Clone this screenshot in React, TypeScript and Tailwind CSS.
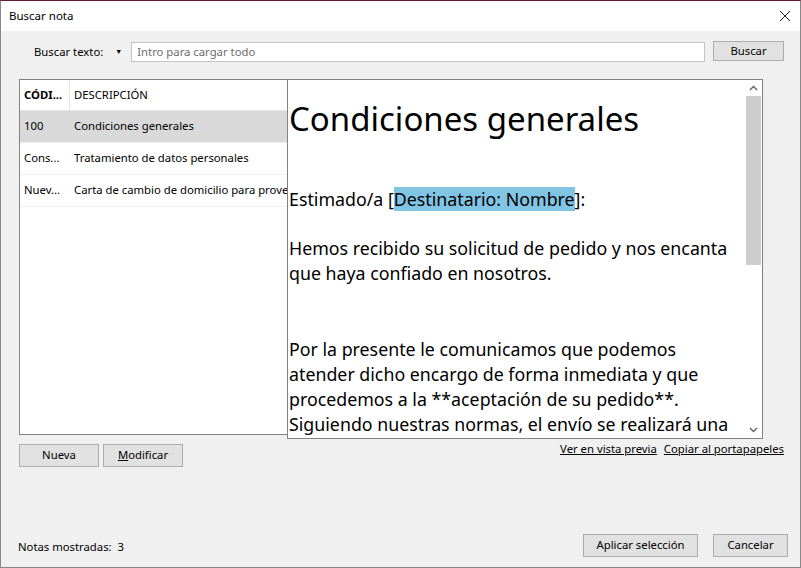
import React from "react"

const ui = { fontFamily: '"Noto Sans", "Open Sans", sans-serif' }

function Chevron({ down = false }: { down?: boolean }) {
  return (
    <svg width="9" height="6" viewBox="0 0 9 6" className={down ? "rotate-180" : ""}>
      <path d="M1 5 L4.5 1.5 L8 5" fill="none" stroke="#606060" strokeWidth="1.4" />
    </svg>
  )
}

function WinButton({ children, className = "" }: { children: React.ReactNode; className?: string }) {
  return (
    <div
      className={`flex items-center justify-center border border-[#adadad] bg-[#e1e1e1] text-[11.3px] text-black whitespace-nowrap ${className}`}
    >
      {children}
    </div>
  )
}

const rows = [
  { code: "100", desc: "Condiciones generales", selected: true },
  { code: "Cons...", desc: "Tratamiento de datos personales", selected: false },
  { code: "Nuev...", desc: "Carta de cambio de domicilio para proveedores", selected: false },
]

export default function App() {
  return (
    <div
      className="w-[801px] h-[568px] flex flex-col bg-[#f0f0f0] border border-[#888888] border-t-[#6b1a33] overflow-hidden text-black"
      style={ui}
    >
      {/* barra de título */}
      <div className="h-[30px] shrink-0 bg-white flex items-center justify-between pl-[8px] pr-[9px]">
        <span className="text-[11.5px]">Buscar nota</span>
        <svg width="12" height="12" viewBox="0 0 12 12">
          <path d="M1 1 L11 11 M11 1 L1 11" stroke="#222" strokeWidth="1" />
        </svg>
      </div>

      {/* búsqueda */}
      <div className="flex items-center h-[20px] mt-[11px] pl-[33px] pr-[16px]">
        <span className="text-[11.3px] whitespace-nowrap">Buscar texto:</span>
        <span className="text-[7px] ml-[12px] w-[16px]">▼</span>
        <div className="ml-auto h-[20px] w-[574px] bg-white border border-[#c4c4c4] flex items-center pl-[5px]">
          <span className="text-[11.3px] text-[#6d6d6d]">Intro para cargar todo</span>
        </div>
        <WinButton className="ml-[8px] h-[20px] w-[71px] -mt-[2px]">Buscar</WinButton>
      </div>

      {/* lista + vista previa */}
      <div className="flex mt-[17px] pl-[18px] h-[360px]">
        <div className="w-[269px] h-[356px] bg-white border border-[#828282] flex flex-col overflow-hidden">
          <div className="h-[31px] flex border-b border-[#e5e5e5] text-[11.3px] shrink-0">
            <div className="w-[50px] border-r border-[#e5e5e5] flex items-center pl-[4px] font-bold">CÓDI...</div>
            <div className="flex items-center pl-[4px]">DESCRIPCIÓN</div>
          </div>
          {rows.map((r) => (
            <div
              key={r.code}
              className={`h-[32px] shrink-0 flex items-center text-[11.3px] whitespace-nowrap border-b border-[#f0f0f0] ${
                r.selected ? "bg-[#d9d9d9]" : ""
              }`}
            >
              <span className="w-[50px] pl-[4px] shrink-0">{r.code}</span>
              <span className="pl-[4px]">{r.desc}</span>
            </div>
          ))}
        </div>

        <div className="relative z-10 -ml-[1px] w-[476px] h-[360px] bg-white border border-[#828282] flex">
          <div className="flex-1 overflow-hidden pl-[1px] text-[17.8px] leading-[25px] whitespace-nowrap">
            <div className="text-[33px] leading-[40px] mt-[19px]">Condiciones generales</div>
            <div className="mt-[48px]">
              Estimado/a [<span className="bg-[#80c5e4]">Destinatario: Nombre</span>]:
            </div>
            <div className="mt-[24px]">
              Hemos recibido su solicitud de pedido y nos encanta
              <br />
              que haya confiado en nosotros.
            </div>
            <div className="mt-[51px]">
              Por la presente le comunicamos que podemos
              <br />
              atender dicho encargo de forma inmediata y que
              <br />
              procedemos a la **aceptación de su pedido**.
              <br />
              Siguiendo nuestras normas, el envío se realizará una
            </div>
          </div>
          <div className="w-[17px] shrink-0 flex flex-col items-center">
            <div className="h-[16px] flex items-center justify-center">
              <Chevron />
            </div>
            <div className="w-[15px] h-[169px] bg-[#cdcdcd]" />
            <div className="flex-1" />
            <div className="h-[16px] flex items-center justify-center">
              <Chevron down />
            </div>
          </div>
        </div>
      </div>

      {/* botones y enlaces */}
      <div className="flex items-start mt-[8px] pl-[18px] pr-[16px]">
        <WinButton className="w-[80px] h-[23px] -mt-[3px]">Nueva</WinButton>
        <WinButton className="w-[80px] h-[23px] -mt-[3px] ml-[4px]">
          <span className="underline">M</span>odificar
        </WinButton>
        <div className="ml-auto -mt-[6px] flex gap-[7px] text-[11.3px] underline">
          <span>Ver en vista previa</span>
          <span>Copiar al portapapeles</span>
        </div>
      </div>

      {/* pie */}
      <div className="flex items-center mt-auto mb-[10px] pl-[17px] pr-[12px]">
        <span className="text-[11.3px] mt-[3px]">Notas mostradas:&nbsp;&nbsp;3</span>
        <WinButton className="ml-auto w-[115px] h-[23px]">Aplicar selección</WinButton>
        <WinButton className="ml-[15px] w-[75px] h-[23px]">Cancelar</WinButton>
      </div>
    </div>
  )
}
